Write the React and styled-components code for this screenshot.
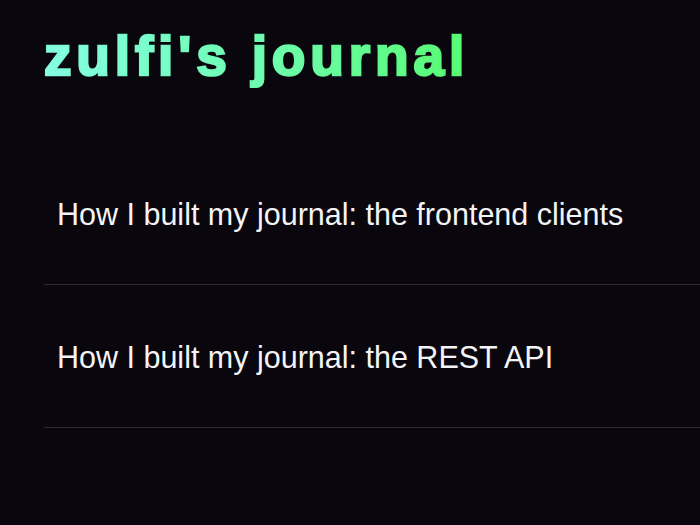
import React from "react";
import styled, { createGlobalStyle } from "styled-components";

const Global = createGlobalStyle`
  html, body { margin: 0; padding: 0; background: #09060d; }
  body { font-family: "Liberation Sans", Arial, sans-serif; color: #f4f4f6; }
`;

const Page = styled.main`
  min-height: 525px;
  padding: 24px 0 0 44px;
  box-sizing: border-box;
  background: #09060d;
`;

const Title = styled.h1`
  margin: 0;
  display: inline-block;
  font-family: "Liberation Sans", Arial, sans-serif;
  font-weight: 700;
  font-size: 55px;
  line-height: 64px;
  letter-spacing: 4.85px;
  background: linear-gradient(90deg, #84ffe2 0%, #6ffdb2 50%, #58fb72 100%);
  -webkit-background-clip: text;
  background-clip: text;
  color: transparent;
  -webkit-text-stroke: 2.5px rgba(0, 0, 0, 0.01);
`;

const List = styled.ul`
  list-style: none;
  margin: 54px 0 0;
  padding: 0;
`;

const Item = styled.li`
  padding: 55px 13px 53px;
  border-bottom: 1px solid #2e2b33;
  font-size: 30.5px;
  line-height: 34px;
  color: #f4f4f6;
`;

const posts = [
  "How I built my journal: the frontend clients",
  "How I built my journal: the REST API",
];

export default function App() {
  return (
    <>
      <Global />
      <Page>
        <Title>zulfi's journal</Title>
        <List>
          {posts.map((p) => (
            <Item key={p}>{p}</Item>
          ))}
        </List>
      </Page>
    </>
  );
}
